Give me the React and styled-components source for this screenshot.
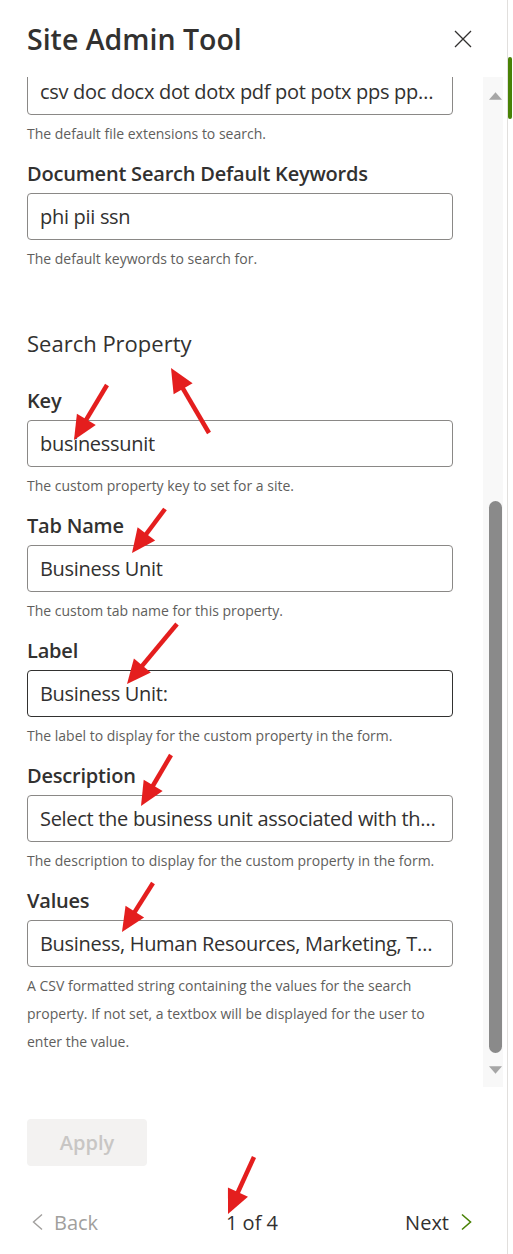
import React from "react";
import styled, { createGlobalStyle } from "styled-components";

const GlobalStyle = createGlobalStyle`
  html, body { margin: 0; padding: 0; background: #ffffff; }
  body { font-family: "Open Sans", "Noto Sans", sans-serif; color: #323130; }
  * { box-sizing: border-box; }
`;

const Frame = styled.div`
  position: relative;
  display: flex;
  width: 513px;
  height: 1254px;
  overflow: hidden;
  background: #ffffff;
`;

const Panel = styled.div`
  display: flex;
  flex-direction: column;
  width: 508px;
  height: 100%;
  border-right: 1px solid #e1dfdd;
`;

const OuterRail = styled.div`
  width: 5px;
  padding-top: 57px;
`;

const OuterThumb = styled.div`
  width: 4px;
  height: 62px;
  border-radius: 2px;
  background: #498205;
`;

const Header = styled.header`
  flex: 0 0 77px;
  display: flex;
  align-items: center;
  justify-content: space-between;
  padding: 0 28px 0 27px;
`;

const Title = styled.h1`
  margin: 0;
  font-size: 28.5px;
  line-height: 36px;
  font-weight: 600;
  color: #323130;
`;

const CloseButton = styled.button`
  width: 32px;
  height: 32px;
  border: none;
  background: transparent;
  padding: 0;
  display: flex;
  align-items: center;
  justify-content: center;
  color: #323130;
`;

const Body = styled.div`
  flex: 1 1 auto;
  min-height: 0;
  display: flex;
`;

const ScrollView = styled.div`
  width: 483px;
  height: 100%;
  overflow: hidden;
  display: flex;
  flex-direction: column;
  justify-content: flex-end;
`;

const Content = styled.div`
  flex: 0 0 auto;
  padding: 0 30px 19px 27px;
`;

const Track = styled.div`
  width: 20px;
  height: 100%;
  background: #f8f8f8;
  display: flex;
  flex-direction: column;
  padding-left: 6px;
`;

const ArrowBox = styled.div`
  flex: 0 0 ${(p) => p.$h}px;
  display: flex;
  align-items: center;
  justify-content: center;
  width: 13px;
  color: #a6a6a6;
`;

const ThumbArea = styled.div`
  flex: 1 1 auto;
  display: flex;
  flex-direction: column;
  justify-content: flex-end;
`;

const Thumb = styled.div`
  width: 13px;
  border-radius: 7px;
  background: #8a8a8a;
`;

const Field = styled.div`
  display: flex;
  flex-direction: column;
  margin-bottom: 12px;
`;

const Label = styled.label`
  font-size: 20px;
  font-weight: 600;
  line-height: 28px;
  color: #323130;
  margin-bottom: 5px;
  letter-spacing: -0.2px;
`;

const InputBox = styled.div`
  height: 47px;
  border: 1px solid ${(p) => (p.$active ? "#323130" : "#8a8886")};
  border-radius: 4px;
  display: flex;
  align-items: center;
  padding: 0 12px;
  font-size: 20px;
  letter-spacing: -0.3px;
  color: #323130;
  white-space: nowrap;
  overflow: hidden;
`;

const InputText = styled.span`
  overflow: hidden;
  text-overflow: ellipsis;
  white-space: nowrap;
`;

const Helper = styled.div`
  margin-top: 5px;
  font-size: 14px;
  line-height: 28px;
  color: #605e5c;
`;

const SectionTitle = styled.h2`
  margin: 55px 0 29px;
  font-size: 22px;
  font-weight: 400;
  line-height: 30px;
  color: #323130;
`;

const Footer = styled.footer`
  flex: 0 0 167px;
  display: flex;
  flex-direction: column;
  padding: 32px 30px 0 27px;
`;

const ApplyButton = styled.button`
  width: 120px;
  height: 47px;
  border: none;
  border-radius: 4px;
  background: #f3f2f1;
  color: #c8c6c4;
  font-family: inherit;
  font-size: 20px;
  font-weight: 600;
  padding: 0;
`;

const Nav = styled.nav`
  margin-top: 36px;
  height: 40px;
  display: grid;
  grid-template-columns: 1fr auto 1fr;
  align-items: center;
`;

const NavButton = styled.button`
  justify-self: ${(p) => (p.$end ? "end" : "start")};
  display: flex;
  align-items: center;
  gap: ${(p) => (p.$end ? "12px" : "11px")};
  border: none;
  background: transparent;
  padding: ${(p) => (p.$end ? "0 4px 0 0" : "0 0 0 4px")};
  font-family: inherit;
  font-size: 20px;
  color: ${(p) => (p.$disabled ? "#a19f9d" : "#323130")};
`;

const PageCount = styled.span`
  font-size: 20px;
  color: #323130;
`;

const Annotations = styled.svg`
  position: absolute;
  left: 0;
  top: 0;
  pointer-events: none;
`;

const fieldsAbove = [
  {
    value: "csv doc docx dot dotx pdf pot potx pps ppsx ppt pptx txt xls xlsx",
    help: "The default file extensions to search.",
  },
  {
    label: "Document Search Default Keywords",
    value: "phi pii ssn",
    help: "The default keywords to search for.",
  },
];

const propertyFields = [
  { label: "Key", value: "businessunit", help: "The custom property key to set for a site." },
  { label: "Tab Name", value: "Business Unit", help: "The custom tab name for this property." },
  {
    label: "Label",
    value: "Business Unit:",
    help: "The label to display for the custom property in the form.",
    active: true,
  },
  {
    label: "Description",
    value: "Select the business unit associated with this site.",
    help: "The description to display for the custom property in the form.",
  },
  {
    label: "Values",
    value: "Business, Human Resources, Marketing, Technology",
    help: "A CSV formatted string containing the values for the search property. If not set, a textbox will be displayed for the user to enter the value.",
  },
];

const arrows = [
  [209, 433, 171, 368],
  [107, 385, 74, 440],
  [165, 509, 132, 553],
  [177, 624, 127, 684],
  [171, 755, 141, 806],
  [153, 883, 122, 932],
  [254, 1157, 228, 1214],
];

function Arrow({ t }) {
  const [x1, y1, x2, y2] = t;
  const dx = x2 - x1;
  const dy = y2 - y1;
  const len = Math.hypot(dx, dy);
  const ux = dx / len;
  const uy = dy / len;
  const nx = -uy;
  const ny = ux;
  const L = 24;
  const W = 11;
  const bx = x2 - ux * L;
  const by = y2 - uy * L;
  const pts = `${x2},${y2} ${bx + nx * W},${by + ny * W} ${bx - nx * W},${by - ny * W}`;
  return (
    <g>
      <line
        x1={x1}
        y1={y1}
        x2={x2 - ux * (L - 4)}
        y2={y2 - uy * (L - 4)}
        stroke="#e41e1e"
        strokeWidth="4.5"
      />
      <polygon points={pts} fill="#e41e1e" />
    </g>
  );
}

function FormField({ f }) {
  return (
    <Field>
      {f.label && <Label>{f.label}</Label>}
      <InputBox $active={f.active}>
        <InputText>{f.value}</InputText>
      </InputBox>
      <Helper>{f.help}</Helper>
    </Field>
  );
}

export default function App() {
  return (
    <>
      <GlobalStyle />
      <Frame>
        <Panel>
          <Header>
            <Title>Site Admin Tool</Title>
            <CloseButton aria-label="Close">
              <svg width="18" height="18" viewBox="0 0 18 18">
                <path d="M1 1 L17 17 M17 1 L1 17" stroke="#323130" strokeWidth="1.3" fill="none" />
              </svg>
            </CloseButton>
          </Header>
          <Body>
            <ScrollView>
              <Content>
                {fieldsAbove.map((f, i) => (
                  <FormField key={i} f={f} />
                ))}
                <SectionTitle>Search Property</SectionTitle>
                {propertyFields.map((f) => (
                  <FormField key={f.label} f={f} />
                ))}
              </Content>
            </ScrollView>
            <Track>
              <ArrowBox $h={38}>
                <svg width="14" height="8" viewBox="0 0 14 8">
                  <path d="M7 0 L14 8 L0 8 Z" fill="currentColor" />
                </svg>
              </ArrowBox>
              <ThumbArea>
                <Thumb style={{ height: 552 }} />
              </ThumbArea>
              <ArrowBox $h={34}>
                <svg width="14" height="8" viewBox="0 0 14 8">
                  <path d="M0 0 L14 0 L7 8 Z" fill="currentColor" />
                </svg>
              </ArrowBox>
            </Track>
          </Body>
          <Footer>
            <ApplyButton disabled>Apply</ApplyButton>
            <Nav>
              <NavButton $disabled>
                <svg width="12" height="18" viewBox="0 0 12 18">
                  <path d="M11 1.5 L2.5 9 L11 16.5" stroke="#a19f9d" strokeWidth="1.4" fill="none" />
                </svg>
                Back
              </NavButton>
              <PageCount>1 of 4</PageCount>
              <NavButton $end>
                Next
                <svg width="12" height="18" viewBox="0 0 12 18">
                  <path d="M1 1.5 L9.5 9 L1 16.5" stroke="#498205" strokeWidth="1.6" fill="none" />
                </svg>
              </NavButton>
            </Nav>
          </Footer>
        </Panel>
        <OuterRail>
          <OuterThumb />
        </OuterRail>
        <Annotations width="513" height="1254" viewBox="0 0 513 1254">
          {arrows.map((a, i) => (
            <Arrow key={i} t={a} />
          ))}
        </Annotations>
      </Frame>
    </>
  );
}
